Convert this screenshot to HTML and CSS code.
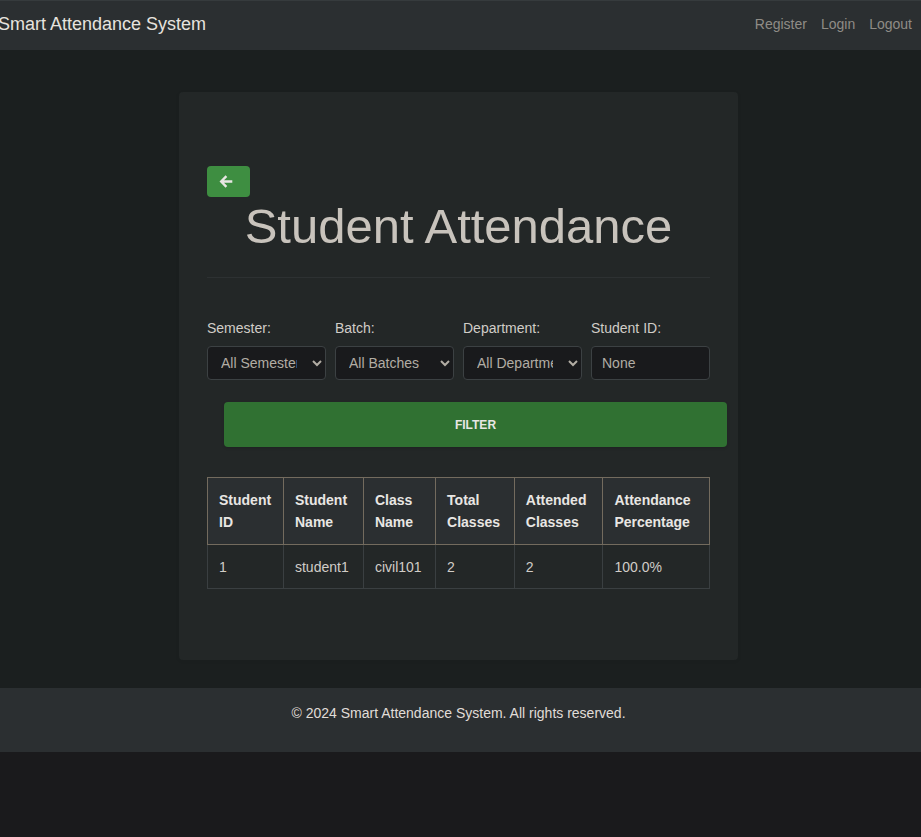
FILE: index.html
```html
<!DOCTYPE html>
<html lang="en">
<head>
<meta charset="utf-8">
<meta name="viewport" content="width=device-width, initial-scale=1">
<title>Student Attendance</title>
<link rel="stylesheet" href="styles.css">
</head>
<body>
<nav class="navbar">
  <a class="brand" href="#">Smart Attendance System</a>
  <div class="nav-links">
    <a href="#">Register</a>
    <a href="#">Login</a>
    <a href="#">Logout</a>
  </div>
</nav>
<main class="page">
  <section class="card">
    <button class="back" type="button" aria-label="Back">
      <svg width="14" height="14" viewBox="0 0 14 14" fill="none" stroke="currentColor" stroke-width="2.4" aria-hidden="true"><path d="M7.4 1.2 2.2 6.5l5.2 5.3M2 6.5h11.3"/></svg>
    </button>
    <h1>Student Attendance</h1>
    <hr>
    <form class="filters">
      <div class="fields">
        <div class="field">
          <label for="semester">Semester:</label>
          <select id="semester"><option>All Semesters</option></select>
        </div>
        <div class="field">
          <label for="batch">Batch:</label>
          <select id="batch"><option>All Batches</option></select>
        </div>
        <div class="field">
          <label for="department">Department:</label>
          <select id="department"><option>All Departments</option></select>
        </div>
        <div class="field">
          <label for="student">Student ID:</label>
          <input id="student" type="text" value="None">
        </div>
      </div>
      <button class="submit" type="submit">FILTER</button>
    </form>
    <table>
      <thead>
        <tr><th>Student ID</th><th>Student Name</th><th>Class Name</th><th>Total Classes</th><th>Attended Classes</th><th>Attendance Percentage</th></tr>
      </thead>
      <tbody>
        <tr><td>1</td><td>student1</td><td>civil101</td><td>2</td><td>2</td><td>100.0%</td></tr>
      </tbody>
    </table>
  </section>
</main>
<footer class="footer">© 2024 Smart Attendance System. All rights reserved.</footer>
</body>
</html>
```
FILE: styles.css
```css
* { box-sizing: border-box; }

body {
  margin: 0;
  background: #1a1a1c;
  color: #d1cdc7;
  font: 14px/22px "Liberation Sans", Arial, sans-serif;
}

.navbar {
  display: flex;
  justify-content: space-between;
  align-items: center;
  height: 50px;
  padding: 0 9px 4px 0;
  margin-left: -2px;
  border-top: 1px solid #363b3d;
  background: #2b2f31;
}

.navbar a { text-decoration: none; }

.brand {
  color: #e6e3df;
  font-size: 18px;
}

.nav-links {
  display: flex;
  gap: 14px;
}

.nav-links a { color: #8f8c86; }

.page {
  padding: 42px 4px 28px 0;
  background: #1b1f1f;
}

.card {
  max-width: 559px;
  margin: 0 auto;
  padding: 74px 28px 71px;
  border-radius: 4px;
  background: #232727;
  box-shadow: 0 1px 4px rgba(0, 0, 0, 0.06);
}

.back {
  display: flex;
  align-items: center;
  width: 43px;
  height: 31px;
  padding: 0 12px;
  border: 0;
  border-radius: 4px;
  background: #3e8e41;
  color: #e8e6e3;
}

h1 {
  margin: 0;
  color: #c8c3bc;
  font-size: 49px;
  font-weight: 400;
  line-height: 58px;
  text-align: center;
}

hr {
  margin: 22px 0 39px;
  border: 0;
  border-top: 1px solid #2d3132;
}

.fields {
  display: grid;
  grid-template-columns: repeat(4, minmax(0, 1fr));
  gap: 9px;
}

label {
  display: block;
  margin-bottom: 7px;
}

select,
input {
  display: block;
  width: 100%;
  height: 34px;
  border: 1px solid #3c4143;
  border-radius: 4px;
  background: #191a1c;
  color: #b2ada4;
  font: inherit;
}

select { padding: 0 12px 0 9px; }

input { padding: 0 10px; }

.submit {
  display: block;
  width: 100%;
  height: 45px;
  margin: 22px 0 30px;
  transform: translateX(17px);
  border: 0;
  border-radius: 4px;
  background: #307132;
  color: #e8e6e3;
  font: bold 12px "Liberation Sans", Arial, sans-serif;
  box-shadow: 0 1px 3px rgba(0, 0, 0, 0.15);
}

table {
  width: 100%;
  border-collapse: collapse;
}

th,
td {
  padding: 11px 10px 10px 11px;
  border: 1px solid #3a3f41;
  text-align: left;
}

th {
  padding-bottom: 11px;
  border-color: #736b5e;
  background: #2b2f31;
  color: #e8e6e3;
}

.footer {
  height: 64px;
  padding: 14px 4px 28px 0;
  background: #2b2f31;
  color: #e0ddd8;
  text-align: center;
}
```
